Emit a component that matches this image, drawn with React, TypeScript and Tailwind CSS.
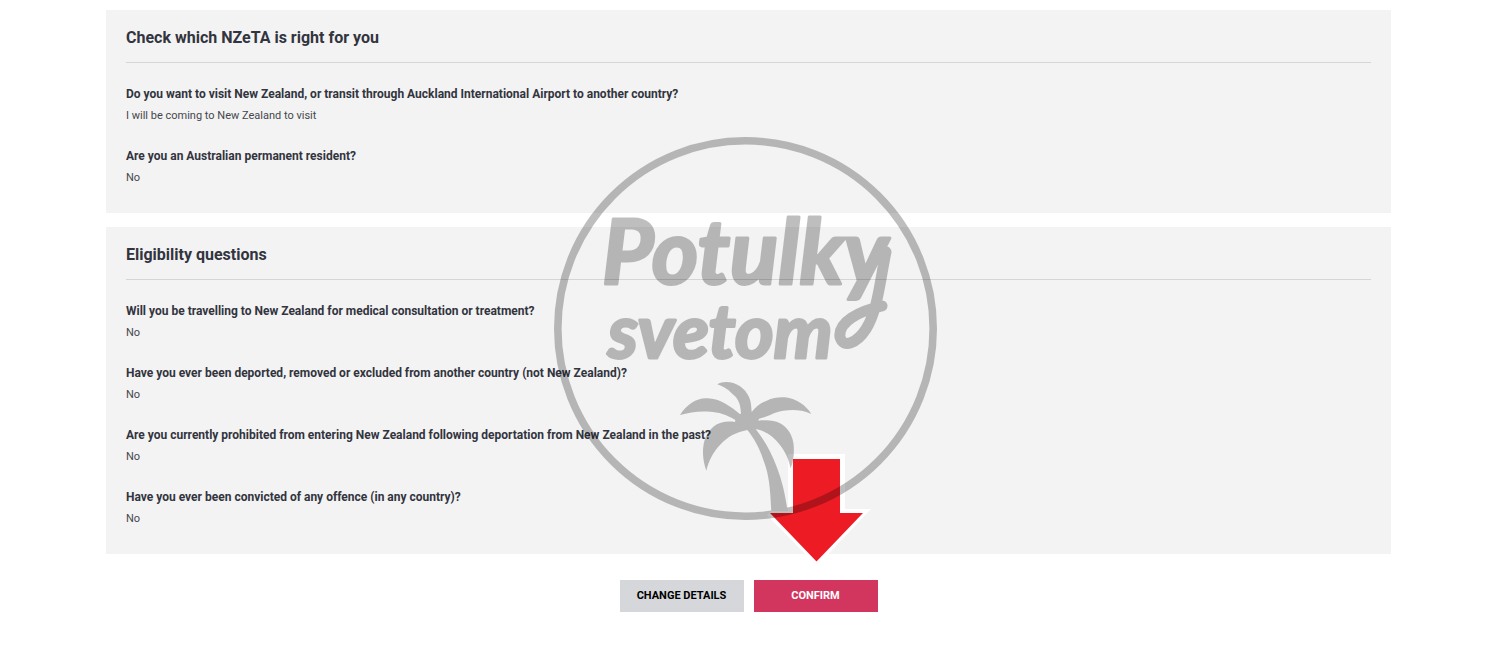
type Answer = { question: string; answer: string };

const nzeta: Answer[] = [
  {
    question:
      'Do you want to visit New Zealand, or transit through Auckland International Airport to another country?',
    answer: 'I will be coming to New Zealand to visit',
  },
  { question: 'Are you an Australian permanent resident?', answer: 'No' },
];

const eligibility: Answer[] = [
  { question: 'Will you be travelling to New Zealand for medical consultation or treatment?', answer: 'No' },
  { question: 'Have you ever been deported, removed or excluded from another country (not New Zealand)?', answer: 'No' },
  { question: 'Are you currently prohibited from entering New Zealand following deportation from New Zealand in the past?', answer: 'No' },
  { question: 'Have you ever been convicted of any offence (in any country)?', answer: 'No' },
];

function Section({ title, items }: { title: string; items: Answer[] }) {
  return (
    <section className="bg-[#f3f3f3] px-5 pt-4 pb-[23px]">
      <h2 className="border-b border-[#d3d5d8] pb-3 text-base leading-6 font-bold">{title}</h2>
      <dl className="flex flex-col gap-[18px] pt-[21px]">
        {items.map((item) => (
          <div key={item.question}>
            <dt className="text-[12px] leading-5 font-bold">{item.question}</dt>
            <dd className="text-[11px] leading-6 text-[#45474c]">{item.answer}</dd>
          </div>
        ))}
      </dl>
    </section>
  );
}

function Watermark() {
  return (
    <svg
      className="pointer-events-none absolute top-[130px] left-1/2 h-[440px] w-[400px] -translate-x-1/2"
      viewBox="546 130 400 440"
      aria-hidden="true"
    >
      <path d="M788 454H845V509H871L817 566L767 515L771 511H788Z" fill="#fff" />
      <path d="M793 459H840V513H863L816.5 561.5L770 513H793Z" fill="#ed1c24" />
      <g opacity="0.25">
        <circle cx="745.5" cy="328.5" r="187.7" fill="none" stroke="#000" strokeWidth="7.6" />
        <g
          className="font-['Lato',sans-serif] font-bold italic"
          stroke="#000"
          strokeWidth="3"
          strokeLinejoin="round"
        >
          <text x="602" y="284" fontSize="89">Potulky</text>
          <text x="608" y="358" fontSize="74">svetom</text>
        </g>
        <path
          d="M886 252C880 280 878 310 866 329C857 343 843 349 840 337C838 322 859 311 882 306"
          fill="none"
          stroke="#000"
          strokeWidth="11"
          strokeLinecap="round"
        />
        <path
          transform="translate(545 130) scale(0.33333)"
          d="M405 855C425 824 455 804 485 805C525 804 560 832 585 853L588 850C586 820 580 805 560 790C548 777 535 769 517 763C530 754 549 754 565 759C595 768 612 795 616 812C619 825 619 835 620 846C635 828 648 818 665 812C684 803 700 801 720 802C756 806 783 827 799 852C768 838 742 839 715 842C689 845 671 860 642 866L640 872C665 870 686 870 705 880C730 893 743 918 746 945C748 975 745 993 737 1015C731 987 722 967 705 945C687 921 660 901 632 897C661 934 680 970 695 1010C711 1052 720 1090 727 1138L679 1148C676 1078 673 1035 655 990C643 952 625 922 607 900C575 906 547 920 525 945C505 965 491 993 484 1022C475 998 472 970 475 950C478 924 488 905 505 890C523 876 547 872 570 876L571 870C544 853 520 846 495 845C463 842 430 848 405 855Z"
        />
      </g>
    </svg>
  );
}

export default function App() {
  return (
    <main className="relative min-h-screen bg-white pt-[10px] pr-[101px] pb-[45px] pl-[106px] font-['Roboto',sans-serif] text-[#32343e]">
      <div className="flex flex-col gap-[14px]">
        <Section title="Check which NZeTA is right for you" items={nzeta} />
        <Section title="Eligibility questions" items={eligibility} />
      </div>
      <div className="mt-[26px] flex justify-center gap-[10px] text-[11px] leading-8 font-bold">
        <button type="button" className="w-[124px] bg-[#d5d7da] text-black">CHANGE DETAILS</button>
        <button type="button" className="w-[124px] bg-[#d2365f] text-white">CONFIRM</button>
      </div>
      <Watermark />
    </main>
  );
}
